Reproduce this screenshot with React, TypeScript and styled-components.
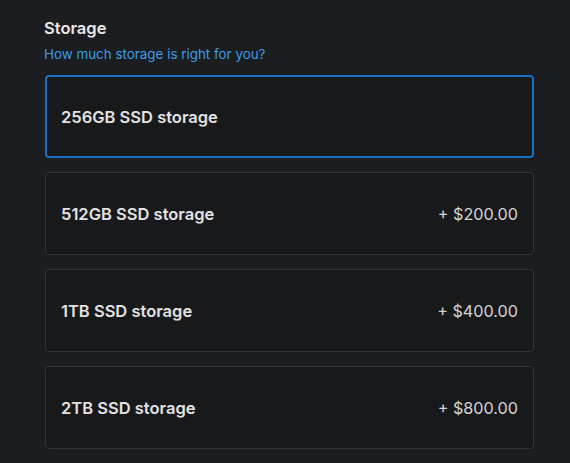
import styled, { createGlobalStyle } from "styled-components";

const GlobalStyle = createGlobalStyle`
  html, body {
    margin: 0;
    padding: 0;
    background-color: #1c1d20;
  }
  body {
    font-family: Inter, "Noto Sans", sans-serif;
  }
`;

const options = [
  { label: "256GB SSD storage", price: "", selected: true },
  { label: "512GB SSD storage", price: "+ $200.00", selected: false },
  { label: "1TB SSD storage", price: "+ $400.00", selected: false },
  { label: "2TB SSD storage", price: "+ $800.00", selected: false },
];

const App = () => {
  return (
    <>
      <GlobalStyle />
      <Page>
        <Title>Storage</Title>
        <Help>How much storage is right for you?</Help>
        <List>
          {options.map((o) => (
            <Card key={o.label} $selected={o.selected}>
              <Label>{o.label}</Label>
              {o.price && <Price>{o.price}</Price>}
            </Card>
          ))}
        </List>
      </Page>
    </>
  );
};

export default App;

const Page = styled.div`
  width: 570px;
  height: 463px;
  box-sizing: border-box;
  padding: 18px 36px 0 45px;
  background-color: #1c1d20;
  overflow: hidden;
`;
const Title = styled.div`
  font-size: 16.5px;
  font-weight: 600;
  color: #e8e8e8;
  line-height: 20px;
  margin-left: -1px;
`;
const Help = styled.div`
  margin-top: 7px;
  font-size: 13.4px;
  color: #3d9be6;
  line-height: 18px;
  margin-left: -1px;
`;
const List = styled.div`
  margin-top: 12px;
  display: flex;
  flex-direction: column;
  gap: 14px;
`;
const Card = styled.div<{ $selected: boolean }>`
  height: 83px;
  box-sizing: border-box;
  display: flex;
  justify-content: space-between;
  align-items: center;
  padding: 0 15px;
  border-radius: 4px;
  background-color: #18191b;
  border: ${(p) => (p.$selected ? "2px solid #1b6fc0" : "1px solid #333437")};
  padding-left: ${(p) => (p.$selected ? "14px" : "15px")};
`;
const Label = styled.div`
  font-size: 16.5px;
  font-weight: 600;
  color: #e2e2e2;
`;
const Price = styled.div`
  font-size: 16.2px;
  color: #d4d4d4;
`;
